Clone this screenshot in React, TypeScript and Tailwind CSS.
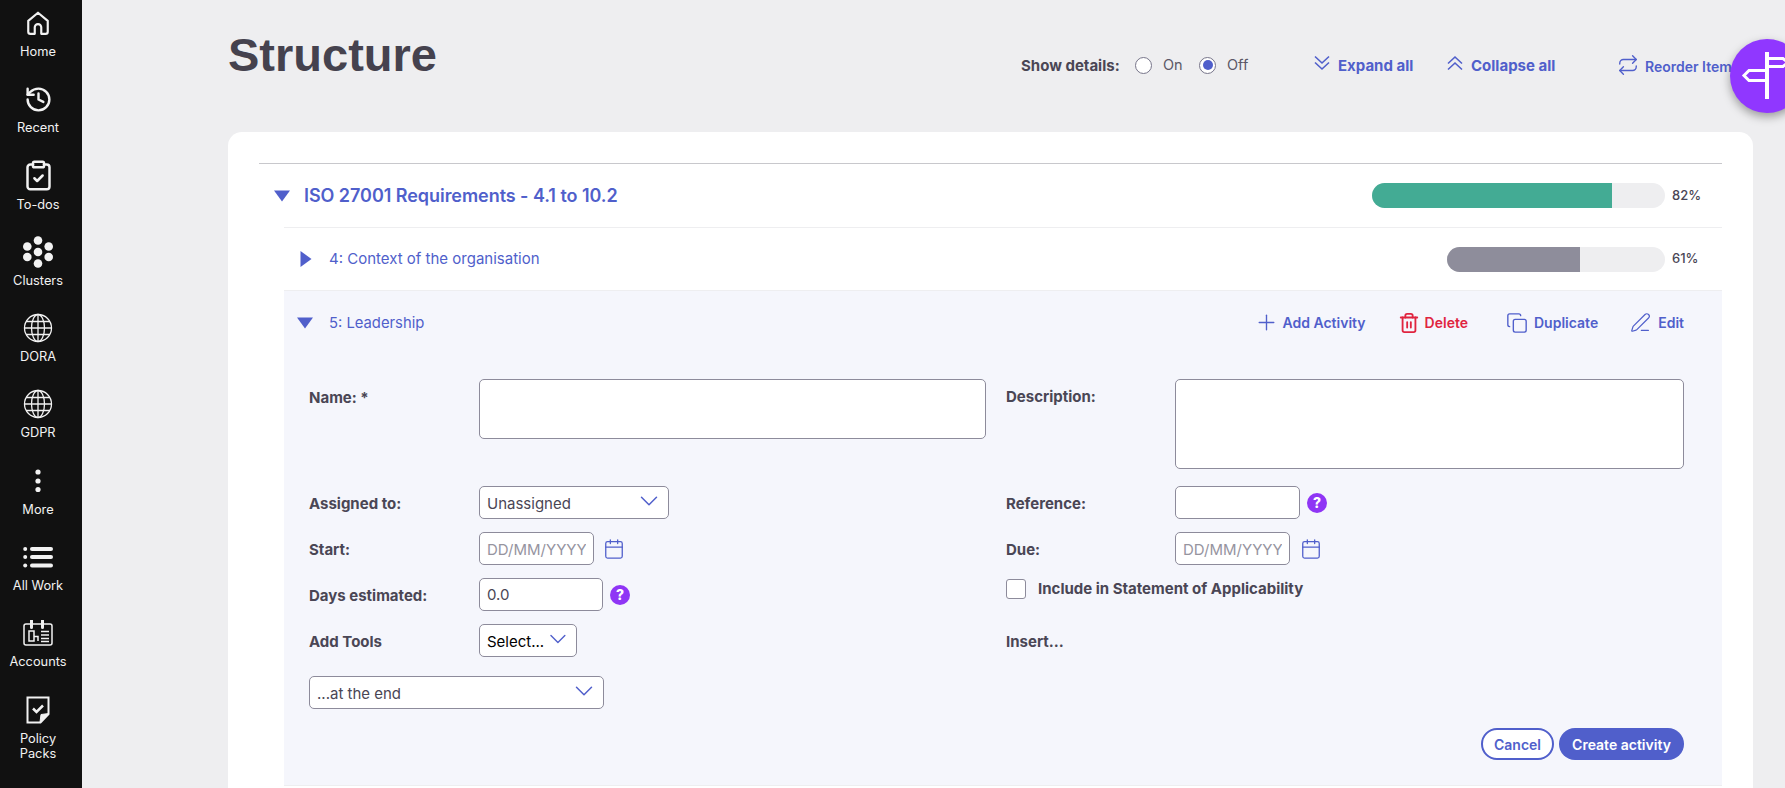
import { ChevronDown, ClipboardCheck, History, Calendar, Copy, PenLine, Plus, Repeat, Trash2 } from "lucide-react";
import type { ReactNode } from "react";

function HomeIcon() {
  return (
    <svg width="26" height="26" viewBox="0 0 24 24" fill="none" stroke="currentColor" strokeWidth="2" strokeLinejoin="round">
      <path d="M3 10 12 2.500l9 7.500v10a2 2 0 0 1-2 2h-4v-6a3 3 0 0 0-6 0v6H5a2 2 0 0 1-2-2z" />
    </svg>
  );
}

function ClustersIcon() {
  return (
    <svg width="32" height="32" viewBox="0 0 32 32" fill="currentColor">
      <circle cx="16" cy="16" r="4.300" />
      <circle cx="16" cy="4.500" r="4.300" />
      <circle cx="16" cy="27.500" r="4.300" />
      <circle cx="5.300" cy="10.500" r="4.300" />
      <circle cx="26.700" cy="10.500" r="4.300" />
      <circle cx="5.300" cy="21" r="4.300" />
      <circle cx="26.700" cy="21" r="4.300" />
    </svg>
  );
}

function GlobeIcon() {
  return (
    <svg width="30" height="30" viewBox="0 0 30 30" fill="none" stroke="currentColor" strokeWidth="1.300">
      <circle cx="15" cy="15" r="13.500" />
      <ellipse cx="15" cy="15" rx="6.500" ry="13.500" />
      <path d="M15 1.500v27M3 8.500h24M1.500 15h27M3 21.500h24" />
    </svg>
  );
}

function MoreIcon() {
  return (
    <svg width="8" height="24" viewBox="0 0 8 24" fill="currentColor">
      <circle cx="4" cy="3" r="2.600" />
      <circle cx="4" cy="12" r="2.600" />
      <circle cx="4" cy="20.500" r="2.600" />
    </svg>
  );
}

function AllWorkIcon() {
  return (
    <svg width="30" height="22" viewBox="0 0 30 22" fill="currentColor">
      <circle cx="2.200" cy="3" r="2" />
      <circle cx="2.200" cy="11" r="2" />
      <circle cx="2.200" cy="19.500" r="2" />
      <rect x="7" y="1" width="23" height="4" rx="2" />
      <rect x="7" y="9" width="23" height="4" rx="2" />
      <rect x="7" y="17.500" width="23" height="4" rx="2" />
    </svg>
  );
}

function AccountsIcon() {
  return (
    <svg width="30" height="26" viewBox="0 0 30 26" fill="none" stroke="currentColor">
      <rect x="1" y="4" width="28" height="21" rx="2" strokeWidth="1.500" />
      <path d="M8.500 0.500v7M19.500 0.500v7" strokeWidth="3" strokeLinecap="round" />
      <path d="M6 11h5v10H6zM11 16.500h4V21" strokeWidth="1.500" />
      <path d="M18 11.500h8M18 15h8M18 18.500h8M18 21.500h8" strokeWidth="1.300" />
    </svg>
  );
}

function PolicyIcon() {
  return (
    <svg width="24" height="28" viewBox="0 0 24 28" fill="none" stroke="currentColor">
      <path d="M1.500 1.500h21V18l-8 8.500h-13z" strokeWidth="2" />
      <path d="M14 26l1-7.500 8-1z" fill="currentColor" strokeWidth="1" />
      <path d="M7 12.500l3.500 3.500L17 9.500" strokeWidth="2.500" />
    </svg>
  );
}

function SignpostIcon() {
  return (
    <svg width="74" height="74" viewBox="0 0 74 74" fill="none" stroke="white">
      <path d="M37 13v47" strokeWidth="4" />
      <path d="M39 19.500h14l5 4-5 4H39" strokeWidth="3" />
      <path d="M35 31.500H19l-5 5 5 5h16" strokeWidth="3" />
    </svg>
  );
}

// lucide's double chevrons are too narrow for this toolbar
function DoubleChevron({ up }: { up?: boolean }) {
  return (
    <svg width="18" height="16" viewBox="0 0 18 16" fill="none" stroke="currentColor" strokeWidth="1.600" className={`-mt-[7px] ${up ? "rotate-180" : ""}`}>
      <path d="M2 1.500l7 6.500 7-6.500M2 7.500 9 14l7-6.500" />
    </svg>
  );
}

const NAV_ITEMS: { label: ReactNode; icon: ReactNode }[] = [
  { label: "Home", icon: <HomeIcon /> },
  { label: "Recent", icon: <History size={29} strokeWidth={2} /> },
  { label: "To-dos", icon: <ClipboardCheck size={33} strokeWidth={1.800} /> },
  { label: "Clusters", icon: <ClustersIcon /> },
  { label: "DORA", icon: <GlobeIcon /> },
  { label: "GDPR", icon: <GlobeIcon /> },
  { label: "More", icon: <MoreIcon /> },
  { label: "All Work", icon: <AllWorkIcon /> },
  { label: "Accounts", icon: <AccountsIcon /> },
  { label: <>Policy<br />Packs</>, icon: <PolicyIcon /> },
];

function Sidebar() {
  return (
    <nav className="w-[82px] shrink-0 bg-[#111111] text-[#f2f2f2]">
      {NAV_ITEMS.map((item, i) => (
        <div key={i} className="flex h-[76.300px] w-[76px] flex-col items-center pt-[8px]">
          <div className="flex h-[30px] items-center justify-center">{item.icon}</div>
          <div className="mt-[6px] text-center text-[12.800px] leading-[15px] font-normal">{item.label}</div>
        </div>
      ))}
    </nav>
  );
}

function Radio({ checked }: { checked?: boolean }) {
  return (
    <span className="-mt-[2px] flex h-[17px] w-[17px] items-center justify-center rounded-full border border-[#77758a] bg-white">
      {checked && <span className="h-[10px] w-[10px] rounded-full bg-[#505fcb]" />}
    </span>
  );
}

function Toolbar() {
  return (
    <div className="mt-[56px] flex h-[20px] items-center text-[15px] font-bold text-[#505fcb]">
      <span className="w-[114px] text-[#4a4655]">Show details:</span>
      <Radio />
      <span className="-mt-[2px] ml-[11px] w-[36px] text-[14.500px] font-normal text-[#5b5866]">On</span>
      <Radio checked />
      <span className="-mt-[2px] ml-[11px] w-[86px] text-[14.500px] font-normal text-[#5b5866]">Off</span>
      <DoubleChevron />
      <span className="ml-[7px] w-[108px]">Expand all</span>
      <DoubleChevron up />
      <span className="ml-[7px] w-[146px]">Collapse all</span>
      <Repeat size={22} strokeWidth={1.500} className="-mt-[2px]" />
      <span className="ml-[6px] text-[14px] font-semibold whitespace-nowrap">Reorder Items</span>
    </div>
  );
}

function Triangle({ dir = "down", className = "" }: { dir?: "down" | "right"; className?: string }) {
  return (
    <svg width="16" height="16" viewBox="0 0 16 16" fill="#505fcb" className={className}>
      {dir === "down" ? <path d="M0 2.500h16L8 13.500z" /> : <path d="M2.500 0 13.500 8 2.500 16z" />}
    </svg>
  );
}

function Progress({ total, fill, color, label }: { total: number; fill: number; color: string; label: string }) {
  return (
    <div className="flex items-center">
      <div className="h-[25px] overflow-hidden rounded-full bg-[#eeeef0]" style={{ width: total }}>
        <div className={`h-full ${color}`} style={{ width: fill }} />
      </div>
      <span className="ml-[7px] w-[50px] text-[13px] font-medium text-[#4a4655]">{label}</span>
    </div>
  );
}

function Label({ children, className = "" }: { children: ReactNode; className?: string }) {
  return <div className={`text-[15px] font-bold text-[#4a4655] ${className}`}>{children}</div>;
}

function Row({ label, children, className = "" }: { label: ReactNode; children: ReactNode; className?: string }) {
  return (
    <div className={`flex h-[33px] items-center ${className}`}>
      <Label className="w-[170px] shrink-0 pt-[4px]">{label}</Label>
      {children}
    </div>
  );
}

const FIELD = "h-[33px] rounded-[5px] border border-[#8d8b9b] bg-white px-[7px] text-[15px] text-[#4a4655] outline-none placeholder:text-[#96949f]";

function FakeSelect({ value, width, dark }: { value: string; width: string; dark?: boolean }) {
  return (
    <div className={`flex items-center justify-between !pr-[4px] ${FIELD} ${width} ${dark ? "text-black" : ""}`}>
      <span className="pt-[3px]">{value}</span>
      <ChevronDown size={30} strokeWidth={1.200} className="-mt-[3px] text-[#505fcb]" />
    </div>
  );
}

function Help() {
  return (
    <span className="ml-[7px] flex h-[20px] w-[20px] items-center justify-center rounded-full bg-[#8f35f5] text-[14px] font-extrabold text-white">?</span>
  );
}

function Action({ icon, label, className = "" }: { icon: ReactNode; label: string; className?: string }) {
  return (
    <div className={`flex items-center text-[14px] font-semibold ${className}`}>
      {icon}
      <span>{label}</span>
    </div>
  );
}

function ActivityForm() {
  return (
    <div className="border-b border-[#eeeef0] bg-[#f5f6fc] pr-[38px] pb-[25px] pl-[25px]">
      {/* Two columns of fields */}
      <div className="flex gap-[20px] pt-[25px]">
        <div className="w-[677px]">
          <div className="flex">
            <Label className="w-[170px] shrink-0 pt-[8px]">Name: *</Label>
            <input className={`${FIELD} !h-[60px] w-[507px]`} />
          </div>
          <Row label="Assigned to:" className="mt-[47px]">
            <FakeSelect value="Unassigned" width="w-[190px]" />
          </Row>
          <Row label="Start:" className="mt-[13px]">
            <input placeholder="DD/MM/YYYY" className={`${FIELD} w-[115px] pt-[2px]`} />
            <Calendar size={22} strokeWidth={1.400} className="ml-[9px] text-[#505fcb]" />
          </Row>
          <Row label="Days estimated:" className="mt-[13px]">
            <input defaultValue="0.0" className={`${FIELD} w-[124px]`} />
            <Help />
          </Row>
          <Row label="Add Tools" className="mt-[13px]">
            <FakeSelect value="Select..." width="w-[98px]" dark />
          </Row>
          <div className="mt-[19px]">
            <FakeSelect value="...at the end" width="w-[295px]" />
          </div>
        </div>

        <div className="w-[678px]">
          <div className="flex">
            <Label className="w-[169px] shrink-0 pt-[7px]">Description:</Label>
            <textarea className={`${FIELD} !h-[90px] w-[509px] resize-none`} />
          </div>
          <Row label="Reference:" className="mt-[17px]">
            <input className={`${FIELD} -ml-[1px] w-[125px]`} />
            <Help />
          </Row>
          <Row label="Due:" className="mt-[13px]">
            <input placeholder="DD/MM/YYYY" className={`${FIELD} -ml-[1px] w-[115px] pt-[2px]`} />
            <Calendar size={22} strokeWidth={1.400} className="ml-[10px] text-[#505fcb]" />
          </Row>
          <div className="mt-[14px] flex h-[20px] items-center">
            <span className="h-[20px] w-[20px] rounded-[3px] border border-[#8d8b9b] bg-white" />
            <Label className="ml-[12px]">Include in Statement of Applicability</Label>
          </div>
          <Row label="Insert..." className="mt-[25px]">
            <span />
          </Row>
        </div>
      </div>

      {/* Buttons */}
      <div className="mt-[19px] flex justify-end gap-[5px] text-[14px] font-semibold">
        <button className="h-[32px] w-[73px] rounded-full border-2 border-[#505fcb] bg-white text-[#505fcb]">Cancel</button>
        <button className="h-[32px] w-[125px] rounded-full bg-[#505fcb] text-white">Create activity</button>
      </div>
    </div>
  );
}

export default function App() {
  return (
    <div className="relative flex h-[788px] w-[1785px] overflow-hidden bg-[#eeeef0] font-['Inter',sans-serif]">
      <Sidebar />

      <main className="flex-1 pl-[146px]">
        {/* Header */}
        <div className="flex h-[132px]">
          <h1 className="w-[793px] pt-[28px] font-['Liberation_Sans',sans-serif] text-[47px] leading-[54px] font-bold text-[#45424e]">Structure</h1>
          <Toolbar />
        </div>

        {/* Card */}
        <div className="h-[656px] w-[1525px] rounded-t-[14px] bg-white pt-[31px] pl-[31px]">
          <div className="w-[1463px] border-t border-[#c8c8cc]">
            <div className="flex h-[63px] items-center justify-between pl-[15px]">
              <div className="flex items-center text-[18px] font-semibold tracking-[-0.05px] text-[#505fcb]">
                <Triangle />
                <span className="ml-[14px]">ISO 27001 Requirements - 4.1 to 10.2</span>
              </div>
              <Progress total={293} fill={240} color="bg-[#43ab94]" label="82%" />
            </div>

            <div className="ml-[25px]">
              <div className="flex h-[63px] items-center justify-between border-t border-[#eeeef0] pl-[14px] text-[15px] text-[#505fcb]">
                <div className="flex items-center">
                  <Triangle dir="right" />
                  <span className="ml-[15px]">4: Context of the organisation</span>
                </div>
                <Progress total={218} fill={133} color="bg-[#8e8d9b]" label="61%" />
              </div>

              <div className="flex h-[64px] items-center border-t border-[#eeeef0] bg-[#f5f6fc] pl-[13px] text-[15px] text-[#505fcb]">
                <Triangle />
                <span className="ml-[16px] pt-[2px] text-[14.800px]">5: Leadership</span>
                <div className="ml-auto flex items-center pr-[38px] text-[#505fcb]">
                  <Action icon={<Plus size={25} strokeWidth={1.300} />} label="Add Activity" className="gap-[4px]" />
                  <Action icon={<Trash2 size={22} strokeWidth={2} />} label="Delete" className="ml-[32px] gap-[5px] text-[#e0243f]" />
                  <Action icon={<Copy size={22} strokeWidth={1.500} />} label="Duplicate" className="ml-[38px] gap-[6px]" />
                  <Action icon={<PenLine size={21} strokeWidth={1.400} />} label="Edit" className="ml-[32px] gap-[7px]" />
                </div>
              </div>

              <ActivityForm />
            </div>
          </div>
        </div>
      </main>

      {/* Help launcher overlaps the toolbar */}
      <div className="absolute top-[39px] left-[1730px] h-[74px] w-[74px] rounded-full bg-[#9037ff] shadow-[0_4px_10px_rgba(0,0,0,0.35)]">
        <SignpostIcon />
      </div>
    </div>
  );
}
